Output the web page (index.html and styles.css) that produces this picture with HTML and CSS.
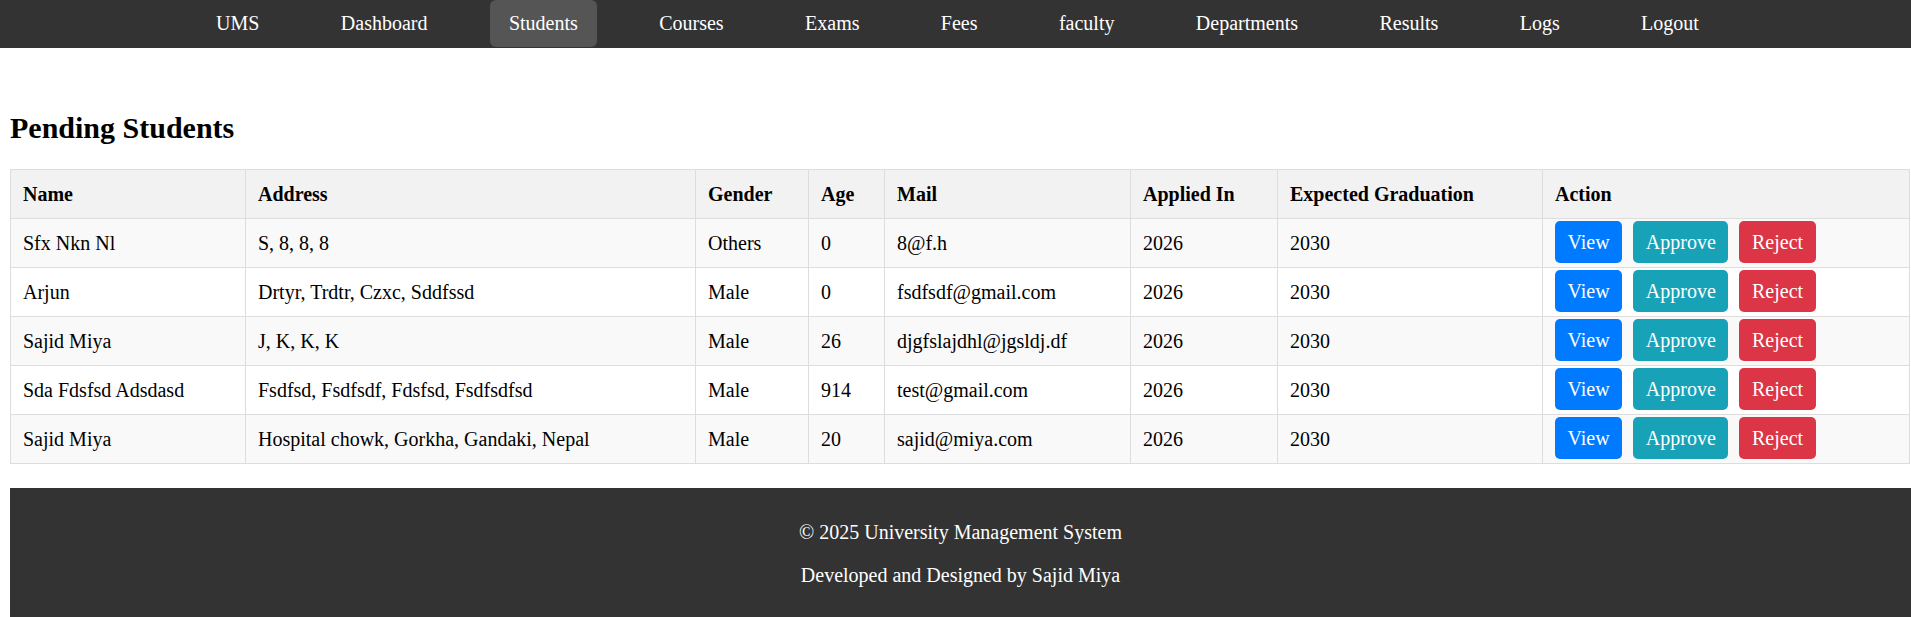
FILE: index.html
```html
<!DOCTYPE html>
<html lang="en">
<head>
  <meta charset="UTF-8">
  <meta name="viewport" content="width=device-width, initial-scale=1.0">
  <title>Pending Students - UMS</title>
  <link rel="stylesheet" href="styles.css">
</head>
<body>
  <nav class="navbar">
    <a href="#">UMS</a>
    <a href="#">Dashboard</a>
    <a href="#" class="active">Students</a>
    <a href="#">Courses</a>
    <a href="#">Exams</a>
    <a href="#">Fees</a>
    <a href="#">faculty</a>
    <a href="#">Departments</a>
    <a href="#">Results</a>
    <a href="#">Logs</a>
    <a href="#">Logout</a>
  </nav>

  <main class="container">
    <h2>Pending Students</h2>

    <table class="students-table">
      <colgroup>
        <col class="col-name">
        <col class="col-address">
        <col class="col-gender">
        <col class="col-age">
        <col class="col-mail">
        <col class="col-applied">
        <col class="col-grad">
        <col class="col-action">
      </colgroup>
      <tr>
        <th>Name</th>
        <th>Address</th>
        <th>Gender</th>
        <th>Age</th>
        <th>Mail</th>
        <th>Applied In</th>
        <th>Expected Graduation</th>
        <th>Action</th>
      </tr>
      <tr>
        <td>Sfx Nkn Nl</td>
        <td>S, 8, 8, 8</td>
        <td>Others</td>
        <td>0</td>
        <td>8@f.h</td>
        <td>2026</td>
        <td>2030</td>
        <td class="actions">
          <button class="btn btn-view">View</button>
          <button class="btn btn-approve">Approve</button>
          <button class="btn btn-reject">Reject</button>
        </td>
      </tr>
      <tr>
        <td>Arjun</td>
        <td>Drtyr, Trdtr, Czxc, Sddfssd</td>
        <td>Male</td>
        <td>0</td>
        <td>fsdfsdf@gmail.com</td>
        <td>2026</td>
        <td>2030</td>
        <td class="actions">
          <button class="btn btn-view">View</button>
          <button class="btn btn-approve">Approve</button>
          <button class="btn btn-reject">Reject</button>
        </td>
      </tr>
      <tr>
        <td>Sajid Miya</td>
        <td>J, K, K, K</td>
        <td>Male</td>
        <td>26</td>
        <td>djgfslajdhl@jgsldj.df</td>
        <td>2026</td>
        <td>2030</td>
        <td class="actions">
          <button class="btn btn-view">View</button>
          <button class="btn btn-approve">Approve</button>
          <button class="btn btn-reject">Reject</button>
        </td>
      </tr>
      <tr>
        <td>Sda Fdsfsd Adsdasd</td>
        <td>Fsdfsd, Fsdfsdf, Fdsfsd, Fsdfsdfsd</td>
        <td>Male</td>
        <td>914</td>
        <td>test@gmail.com</td>
        <td>2026</td>
        <td>2030</td>
        <td class="actions">
          <button class="btn btn-view">View</button>
          <button class="btn btn-approve">Approve</button>
          <button class="btn btn-reject">Reject</button>
        </td>
      </tr>
      <tr>
        <td>Sajid Miya</td>
        <td>Hospital chowk, Gorkha, Gandaki, Nepal</td>
        <td>Male</td>
        <td>20</td>
        <td>sajid@miya.com</td>
        <td>2026</td>
        <td>2030</td>
        <td class="actions">
          <button class="btn btn-view">View</button>
          <button class="btn btn-approve">Approve</button>
          <button class="btn btn-reject">Reject</button>
        </td>
      </tr>
    </table>
  </main>

  <footer>
    <p>&copy; 2025 University Management System</p>
    <p>Developed and Designed by Sajid Miya</p>
  </footer>
</body>
</html>
```

FILE: styles.css
```css
/* General */
body {
  margin: 0;
  font-family: "Liberation Serif", "Times New Roman", serif;
  font-size: 20px;
  color: #000;
  background-color: #fff;
}

/* Navbar */
.navbar {
  background-color: #333;
  display: flex;
  justify-content: center;
  gap: 43.4px;
  padding: 0 0 1px 4px;
}

.navbar a {
  color: white;
  text-decoration: none;
  padding: 12px 19px;
  line-height: 23px;
  border-radius: 6px;
}

.navbar a.active,
.navbar a:hover {
  background-color: #555;
}

/* Main content */
.container {
  padding: 38px 1px 0 10px;
}

h2 {
  font-size: 30px;
  margin: 25px 0 24px;
}

.students-table {
  width: 100%;
  border-collapse: collapse;
  table-layout: fixed;
}

.col-name { width: 235px; }
.col-address { width: 450px; }
.col-gender { width: 113px; }
.col-age { width: 76px; }
.col-mail { width: 246px; }
.col-applied { width: 147px; }
.col-grad { width: 265px; }

.students-table th,
.students-table td {
  border: 1px solid #ddd;
  padding: 12.5px 12px;
  text-align: left;
  line-height: 23px;
}

.students-table th {
  background-color: #f2f2f2;
}

.students-table tr:nth-child(even) {
  background-color: #f9f9f9;
}

.students-table td.actions {
  padding: 0 12px 2px;
}

/* Buttons */
.btn {
  font-family: inherit;
  font-size: 20px;
  line-height: 23px;
  color: white;
  border: none;
  border-radius: 5px;
  padding: 9.5px 12.5px;
  margin-right: 6.2px;
  cursor: pointer;
  vertical-align: middle;
}

.btn-view {
  background-color: #007bff;
}

.btn-approve {
  background-color: #17a2b8;
}

.btn-reject {
  background-color: #dc3545;
}

/* Footer */
footer {
  margin: 24px 0 0 10px;
  background-color: #333;
  color: white;
  text-align: center;
  padding: 12.5px 0 10px;
}

footer p {
  margin: 20px 0;
  line-height: 23px;
}
```
